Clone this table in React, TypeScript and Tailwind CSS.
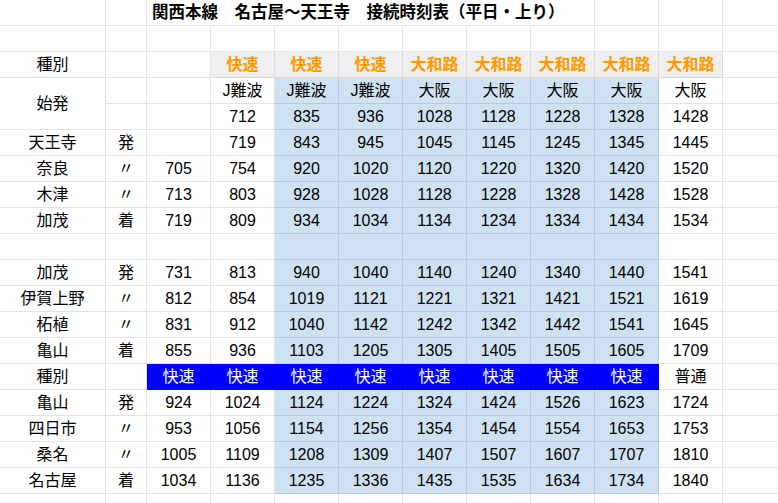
import React from "react";

type Kind = "w" | "g" | "b" | "B";

const kindClass: Record<Kind, string> = {
  w: "bg-white border-[#e2e2e2] text-black",
  g: "bg-[#efefef] border-[#d9d9d9] text-[#ff9900] font-bold",
  b: "bg-[#cfe2f3] border-[#b8c9dc] text-black",
  B: "bg-[#0000ff] border-[#0000ee] text-white",
};

// 停車駅ごとの行: 駅名, 発着, 9列分の時刻 (col2..col10)
const body: [string, string, string[]][] = [
  ["天王寺", "発", ["", "719", "843", "945", "1045", "1145", "1245", "1345", "1445"]],
  ["奈良", "〃", ["705", "754", "920", "1020", "1120", "1220", "1320", "1420", "1520"]],
  ["木津", "〃", ["713", "803", "928", "1028", "1128", "1228", "1328", "1428", "1528"]],
  ["加茂", "着", ["719", "809", "934", "1034", "1134", "1234", "1334", "1434", "1534"]],
  ["", "", ["", "", "", "", "", "", "", "", ""]],
  ["加茂", "発", ["731", "813", "940", "1040", "1140", "1240", "1340", "1440", "1541"]],
  ["伊賀上野", "〃", ["812", "854", "1019", "1121", "1221", "1321", "1421", "1521", "1619"]],
  ["柘植", "〃", ["831", "912", "1040", "1142", "1242", "1342", "1442", "1541", "1645"]],
  ["亀山", "着", ["855", "936", "1103", "1205", "1305", "1405", "1505", "1605", "1709"]],
  ["種別", "", ["快速", "快速", "快速", "快速", "快速", "快速", "快速", "快速", "普通"]],
  ["亀山", "発", ["924", "1024", "1124", "1224", "1324", "1424", "1526", "1623", "1724"]],
  ["四日市", "〃", ["953", "1056", "1154", "1256", "1354", "1454", "1554", "1653", "1753"]],
  ["桑名", "〃", ["1005", "1109", "1208", "1309", "1407", "1507", "1607", "1707", "1810"]],
  ["名古屋", "着", ["1034", "1136", "1235", "1336", "1435", "1535", "1634", "1734", "1840"]],
];

const kinds = ["", "快速", "快速", "快速", "大和路", "大和路", "大和路", "大和路", "大和路"];
const origins = ["", "J難波", "J難波", "J難波", "大阪", "大阪", "大阪", "大阪", "大阪"];
const firstTimes = ["", "712", "835", "936", "1028", "1128", "1228", "1328", "1428"];

function kindAt(r: number, c: number): Kind {
  if (r === 14 && c >= 2 && c <= 9) return "B";
  if (r === 2 && c >= 3 && c <= 10) return "g";
  if (r >= 3 && r <= 18 && c >= 4 && c <= 9) return "b";
  return "w";
}

function Cell({
  r,
  c,
  children,
  extra = "",
}: {
  r: number;
  c: number;
  children?: React.ReactNode;
  extra?: string;
}) {
  const k = kindAt(r, c);
  const edge = c === 11 ? "border-b" : "border-r border-b";
  return (
    <div
      className={`flex items-center justify-center overflow-hidden whitespace-nowrap ${edge} ${kindClass[k]} ${extra}`}
    >
      {children}
    </div>
  );
}

function Row({ r, cells }: { r: number; cells: string[] }) {
  return (
    <>
      {cells.map((t, i) => (
        <Cell key={i} r={r} c={i}>
          {t}
        </Cell>
      ))}
    </>
  );
}

export default function App() {
  return (
    <div
      className="h-[503px] w-[778px] overflow-hidden bg-white text-[16px] leading-none"
      style={{ fontFamily: '"Liberation Sans", "Noto Sans CJK JP", sans-serif' }}
    >
      <div className="grid grid-cols-[106px_41px_repeat(9,64px)_1fr] auto-rows-[26px]">
        {/* 0: タイトル */}
        <Cell r={0} c={0} />
        <Cell r={0} c={1} />
        <Cell r={0} c={2} extra="col-span-7 !justify-start pl-[5px] font-bold text-[16.5px]">
          関西本線　名古屋～天王寺　接続時刻表（平日・上り）
        </Cell>
        <Cell r={0} c={9} />
        <Cell r={0} c={10} />
        <Cell r={0} c={11} />

        {/* 1: 空行 */}
        <Row r={1} cells={Array(12).fill("")} />

        {/* 2: 種別 */}
        <Row r={2} cells={["種別", "", ...kinds, ""]} />

        {/* 3-4: 始発 */}
        <Cell r={3} c={0} extra="row-span-2">
          始発
        </Cell>
        {["", ...origins, ""].map((t, i) => (
          <Cell key={i} r={3} c={i + 1}>
            {t}
          </Cell>
        ))}
        {["", ...firstTimes, ""].map((t, i) => (
          <Cell key={i} r={4} c={i + 1}>
            {t}
          </Cell>
        ))}

        {/* 5-18 */}
        {body.map(([st, mark, times], i) => (
          <Row key={i} r={i + 5} cells={[st, mark, ...times, ""]} />
        ))}

        {/* 19: 末尾の空行 */}
        <Row r={19} cells={Array(12).fill("")} />
      </div>
    </div>
  );
}
